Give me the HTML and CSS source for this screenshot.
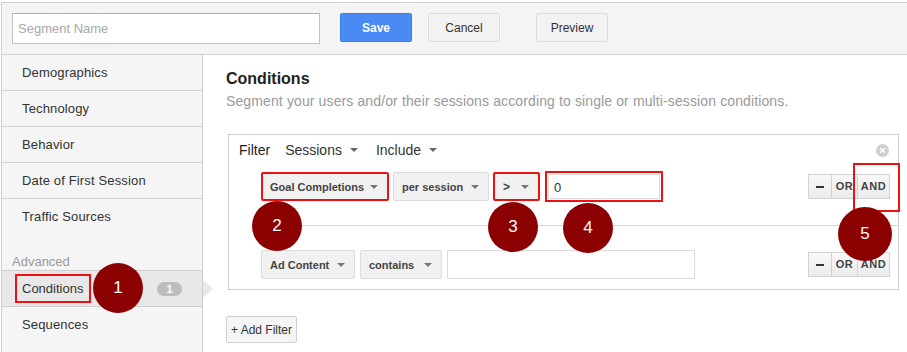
FILE: index.html
```html
<!DOCTYPE html>
<html>
<head>
<meta charset="utf-8">
<link rel="stylesheet" href="styles.css">
</head>
<body>
<div class="page">
  <header class="topbar">
    <div class="name-input">Segment Name</div>
    <button class="btn btn-primary">Save</button>
    <button class="btn btn-cancel">Cancel</button>
    <button class="btn btn-preview">Preview</button>
  </header>
  <div class="body">
    <nav class="sidebar">
      <div class="nav-item">Demographics</div>
      <div class="nav-item">Technology</div>
      <div class="nav-item">Behavior</div>
      <div class="nav-item">Date of First Session</div>
      <div class="nav-item last">Traffic Sources</div>
      <div class="nav-label">Advanced</div>
      <div class="nav-item active">
        <span class="hl-text">Conditions</span>
        <span class="badge">1</span>
      </div>
      <div class="nav-item last">Sequences</div>
    </nav>
    <main class="main">
      <h1 class="title">Conditions</h1>
      <p class="subtitle">Segment your users and/or their sessions according to single or multi-session conditions.</p>
      <section class="filter-box">
        <div class="filter-head">
          <span class="filter-label">Filter</span>
          <span class="menu">Sessions <i class="caret"></i></span>
          <span class="menu">Include <i class="caret"></i></span>
          <span class="close-icon"><svg width="13" height="13" viewBox="0 0 13 13"><circle cx="6.5" cy="6.5" r="6.5" fill="#cfcfcf"/><path d="M4.2 4.2 L8.8 8.8 M8.8 4.2 L4.2 8.8" stroke="#fff" stroke-width="1.6"/></svg></span>
        </div>
        <div class="cond-row">
          <div class="dd dd-goal hl">Goal Completions <i class="caret"></i></div>
          <div class="dd dd-per">per session <i class="caret"></i></div>
          <div class="dd dd-op hl">&gt; <i class="caret"></i></div>
          <div class="val-wrap hl"><div class="val">0</div></div>
          <div class="ops">
            <span class="op op-minus"><i class="minus"></i></span>
            <span class="op">OR</span>
            <span class="op op-and hl-and">AND</span>
          </div>
        </div>
        <div class="divider"></div>
        <div class="cond-row">
          <div class="dd dd-ad">Ad Content <i class="caret"></i></div>
          <div class="dd dd-contains">contains <i class="caret"></i></div>
          <div class="val val-wide"></div>
          <div class="ops">
            <span class="op op-minus"><i class="minus"></i></span>
            <span class="op">OR</span>
            <span class="op op-and">AND</span>
          </div>
        </div>
      </section>
      <button class="add-filter">+ Add Filter</button>
    </main>
  </div>
  <div class="callout c1">1</div>
  <div class="callout c2">2</div>
  <div class="callout c3">3</div>
  <div class="callout c4">4</div>
  <div class="callout c5">5</div>
</div>
</body>
</html>
```

FILE: styles.css
```css
* { box-sizing: border-box; }
html, body { margin: 0; padding: 0; }
body {
  width: 907px;
  height: 352px;
  overflow: hidden;
  background: #fff;
  font-family: "Liberation Sans", Arial, sans-serif;
  color: #333;
}
.page { position: relative; padding-top: 2px; }

.topbar {
  height: 53px;
  margin-left: 1px;
  border-top: 1px solid #cfcfcf;
  border-left: 1px solid #cfcfcf;
  border-bottom: 1px solid #cfcfcf;
  background: #f4f4f4;
  display: flex;
  align-items: flex-start;
  padding: 10px 0 0 10px;
}
.name-input {
  width: 308px;
  height: 31px;
  border: 1px solid #c0c0c0;
  border-top-color: #b0b0b0;
  background: #fff;
  color: #a8a8a8;
  font-size: 13px;
  line-height: 29px;
  padding-left: 5px;
}
.btn {
  height: 29px;
  border-radius: 2px;
  font-family: inherit;
  font-size: 12px;
  padding: 0;
  cursor: default;
}
.btn-primary {
  margin-left: 20px;
  width: 72px;
  background: #4a8af4;
  border: 1px solid #3b7ce6;
  color: #fff;
  font-weight: bold;
}
.btn-cancel {
  margin-left: 16px;
  width: 72px;
  background: #f2f2f2;
  border: 1px solid #dcdcdc;
  color: #333;
}
.btn-preview {
  margin-left: 36px;
  width: 72px;
  background: #f2f2f2;
  border: 1px solid #dcdcdc;
  color: #333;
}

.body { display: flex; }
.sidebar {
  width: 202px;
  height: 300px;
  margin-left: 1px;
  background: #f5f5f5;
  border-left: 1px solid #cfcfcf;
  border-right: 1px solid #cfcfcf;
  flex-shrink: 0;
}
.nav-item {
  height: 36px;
  border-bottom: 1px solid #cfcfcf;
  font-size: 13px;
  line-height: 35px;
  padding-left: 20px;
  color: #333;
  letter-spacing: 0.15px;
  position: relative;
}
.nav-item.last { border-bottom: none; }
.nav-label {
  height: 36px;
  font-size: 13px;
  color: #999;
  padding: 20px 0 0 10px;
  line-height: 14px;
  border-bottom: 1px solid #cfcfcf;
}
.nav-item.active {
  background: #e8e8e8;
  display: flex;
  align-items: center;
  padding-left: 13px;
}
.nav-item.active::after {
  content: "";
  position: absolute;
  right: -11px;
  top: 9px;
  width: 0;
  height: 0;
  border-top: 9px solid transparent;
  border-bottom: 9px solid transparent;
  border-left: 10px solid #e8e8e8;
}
.hl-text {
  border: 2px solid #ee1111;
  width: 76px;
  height: 29px;
  line-height: 25px;
  padding-left: 5px;
  letter-spacing: 0;
}
.badge {
  margin-left: 66px;
  width: 25px;
  height: 14px;
  border-radius: 7px;
  background: #bdbdbd;
  color: #fff;
  font-weight: bold;
  font-size: 11px;
  line-height: 14px;
  text-align: center;
  letter-spacing: 0;
}

.main { flex: 1; padding: 14px 0 0 23px; }
.title {
  margin: 0;
  font-size: 16px;
  font-weight: bold;
  color: #222;
  line-height: 20px;
}
.subtitle {
  margin: 3px 0 0;
  font-size: 14px;
  color: #999;
  line-height: 18px;
  letter-spacing: 0.12px;
}
.filter-box {
  margin: 24px 0 0 2px;
  width: 671px;
  height: 156px;
  border: 1px solid #cfcfcf;
}
.filter-head {
  height: 30px;
  display: flex;
  align-items: center;
  padding-left: 10px;
  font-size: 14px;
  color: #333;
}
.filter-label { color: #222; margin-right: 15px; }
.menu { display: inline-flex; align-items: center; margin-right: 18px; }
.menu .caret { margin-left: 8px; border-top-color: #666; }
.close-icon { margin-left: auto; margin-right: 9px; display: flex; }
.caret {
  display: inline-block;
  width: 0;
  height: 0;
  border-left: 4px solid transparent;
  border-right: 4px solid transparent;
  border-top: 4px solid #777;
}

.cond-row {
  margin-top: 7px;
  display: flex;
  align-items: center;
  padding-left: 32px;
  padding-right: 8px;
  height: 29px;
}
.divider { height: 1px; background: #d6d6d6; margin: 24px 0 24px 32px; }
.divider + .cond-row { margin-top: 0; }
.dd {
  height: 29px;
  display: flex;
  align-items: center;
  justify-content: space-between;
  background: #f1f1f1;
  border: 1px solid #dcdcdc;
  border-radius: 2px;
  font-size: 11px;
  font-weight: bold;
  color: #444;
  padding: 0 9px 0 8px;
  margin-right: 5px;
}
.dd.hl { border: 2px solid #ee1111; }
.dd-goal { width: 128px; padding-left: 7px; margin-right: 4px; }
.dd-per { width: 96px; margin-right: 4px; }
.dd-op { width: 47px; font-size: 12px; margin-right: 5px; }
.dd-ad { width: 94px; }
.dd-contains { width: 82px; }
.val-wrap {
  border: 2px solid #ee1111;
  width: 118px;
  height: 31px;
  padding: 1px;
}
.val {
  height: 100%;
  border: 1px solid #dcdcdc;
  font-size: 13px;
  line-height: 25px;
  padding-left: 5px;
  color: #333;
}
.val-wide { width: 248px; height: 29px; }
.ops { margin-left: auto; display: flex; height: 25px; }
.op {
  height: 25px;
  border: 1px solid #d2d2d2;
  margin-left: -1px;
  background: linear-gradient(#f8f8f8, #ececec);
  font-size: 11px;
  font-weight: bold;
  color: #444;
  line-height: 23px;
  text-align: center;
  letter-spacing: 0.5px;
}
.op-minus { width: 24px; display: flex; align-items: center; justify-content: center; }
.op:nth-child(2) { width: 27px; }
.op-and { width: 33px; }
.minus { display: block; width: 8px; height: 2px; background: #333; }
.hl-and { position: relative; }
.hl-and::after {
  content: "";
  position: absolute;
  left: -5px;
  top: -12px;
  width: 43px;
  height: 45px;
  border: 2px solid #ee1111;
}

.add-filter {
  margin-top: 26px;
  width: 71px;
  height: 27px;
  background: #f5f5f5;
  border: 1px solid #cfcfcf;
  border-radius: 2px;
  font-family: inherit;
  font-size: 12px;
  color: #333;
  padding: 0;
}

.callout {
  position: absolute;
  width: 50px;
  height: 50px;
  border-radius: 50%;
  background: #8b0000;
  color: #fff;
  font-size: 17px;
  line-height: 50px;
  text-align: center;
}
.c1 { left: 93px; top: 263px; }
.c2 { left: 252px; top: 201px; }
.c3 { left: 488px; top: 202px; }
.c4 { left: 563px; top: 203px; }
.c5 { left: 838px; top: 207px; width: 54px; height: 54px; line-height: 54px; }
```
